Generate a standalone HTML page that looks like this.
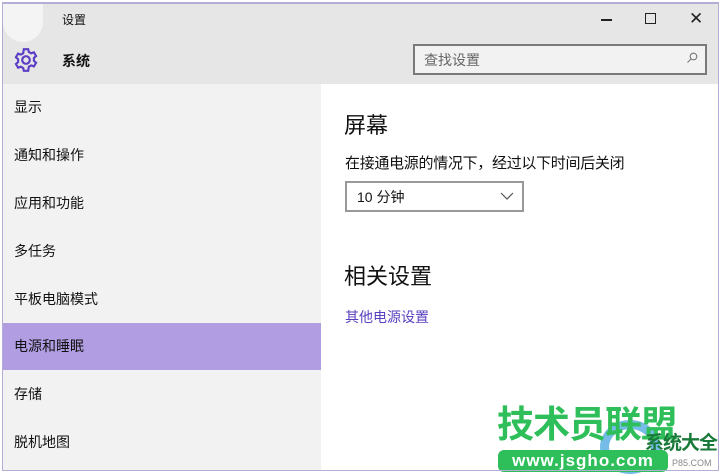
<!DOCTYPE html>
<html><head><meta charset="utf-8"><style>
*{margin:0;padding:0;box-sizing:border-box}
body{width:725px;height:474px;background:#fff;position:relative;overflow:hidden;font-family:"Liberation Sans","Noto Sans CJK SC",sans-serif;color:#111}
.a{position:absolute}
.frame{left:2px;top:2px;width:717px;height:469px;border:1px solid #b4aed6;border-top:2px solid #b4aed6}
.hdr{left:3px;top:4px;width:715px;height:80px;background:#e6e6e6}
.side{left:3px;top:84px;width:318px;height:386px;background:#f2f2f2}
.item{position:absolute;left:0;width:318px;height:47px;font-size:14px;line-height:47px;padding-left:11px;color:#111}
.sel{background:#b19ee2}
</style></head><body>
<div class="a hdr"></div>
<div class="a" style="left:3px;top:4px;width:40px;height:38px;background:#f4f4f4;border-radius:0 0 20px 20px"></div>
<div class="a" style="left:62px;top:11px;font-size:12px">设置</div>
<div class="a" style="left:601px;top:19px;width:11px;height:1.5px;background:#222"></div>
<div class="a" style="left:645px;top:13px;width:11px;height:11px;border:1.5px solid #222"></div>
<div class="a" style="left:689px;top:9px;font-size:17px;color:#222">✕</div>
<svg class="a" style="left:13px;top:47px" width="26" height="26" viewBox="0 0 24 24" fill="none" stroke="#5c3fc6" stroke-width="2"><path d="M10 2h4l.6 2.6 2.2 1.2 2.5-.9 2 3.4-2 1.8v2.6l2 1.8-2 3.4-2.5-.9-2.2 1.2L14 22h-4l-.6-2.6-2.2-1.2-2.5.9-2-3.4 2-1.8v-2.6l-2-1.8 2-3.4 2.5.9 2.2-1.2z"/><circle cx="12" cy="12" r="3.5"/></svg>
<div class="a" style="left:62px;top:51px;font-size:14px;font-weight:bold">系统</div>
<div class="a" style="left:413px;top:44px;width:294px;height:31px;border:2px solid #7a7a7a;background:#f2f2f2"></div>
<div class="a" style="left:424px;top:50px;font-size:14px;color:#666">查找设置</div>
<svg class="a" style="left:686px;top:52px" width="12" height="12" viewBox="0 0 12 12" fill="none" stroke="#777" stroke-width="1.1"><circle cx="7.5" cy="4.5" r="3.3"/><path d="M5 7L1.5 10.5"/></svg>
<div class="a side">
<div class="item" style="top:0">显示</div>
<div class="item" style="top:48px">通知和操作</div>
<div class="item" style="top:96px">应用和功能</div>
<div class="item" style="top:144px">多任务</div>
<div class="item" style="top:192px">平板电脑模式</div>
<div class="item sel" style="top:239px">电源和睡眠</div>
<div class="item" style="top:287px">存储</div>
<div class="item" style="top:335px">脱机地图</div>
</div>
<div class="a" style="left:344px;top:108px;font-size:22px">屏幕</div>
<div class="a" style="left:345px;top:152px;font-size:15px;letter-spacing:-0.3px">在接通电源的情况下，经过以下时间后关闭</div>
<div class="a" style="left:345px;top:181px;width:179px;height:31px;border:2px solid #999"></div>
<div class="a" style="left:357px;top:187px;font-size:14px">10 分钟</div>
<svg class="a" style="left:500px;top:192px" width="14" height="8" viewBox="0 0 14 8" fill="none" stroke="#555" stroke-width="1.2"><path d="M1 1l6 6 6-6"/></svg>
<div class="a" style="left:344px;top:259px;font-size:22px">相关设置</div>
<div class="a" style="left:345px;top:307px;font-size:14px;color:#5a3fc0">其他电源设置</div>
<div class="a" style="left:600px;top:420px;width:60px;height:54px;border-radius:50%;border:9px solid #3aa0e0;opacity:.7"></div>
<div class="a" style="left:497px;top:400px;font-size:37px;font-weight:bold;color:#2fbf5a;letter-spacing:-1px;line-height:50px">技术员联盟</div>
<div class="a" style="left:645px;top:428px;font-size:19px;font-weight:bold;color:#1a7a3a;letter-spacing:-1px">系统大全</div>
<div class="a" style="left:498px;top:450px;width:170px;height:22px;background:#2fbf5a;border-radius:6px;color:#fff;font-size:17px;font-weight:bold;text-align:center;line-height:22px;letter-spacing:1px">www.jsgho.com</div>
<div class="a" style="left:672px;top:458px;font-size:9px;color:#888">P85.COM</div>
<div class="a frame"></div>
</body></html>
